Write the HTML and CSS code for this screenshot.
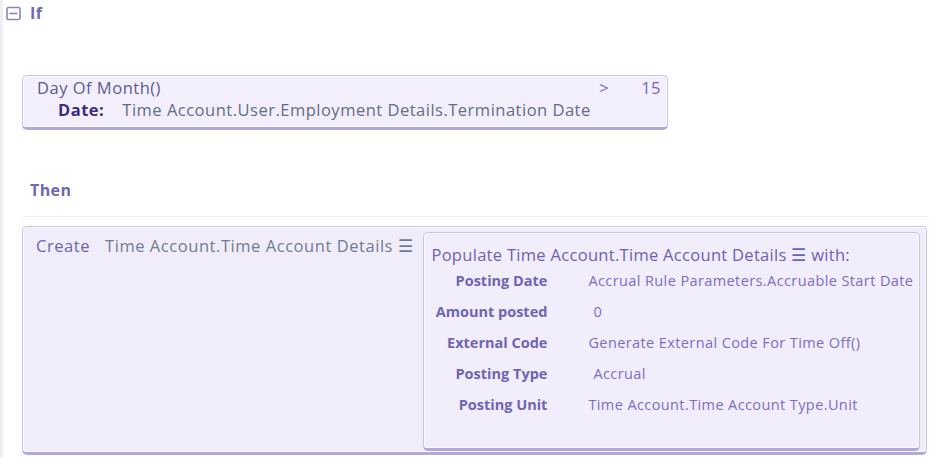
FILE: index.html
```html
<!DOCTYPE html>
<html lang="en">
  <head>
    <meta charset="UTF-8" />
    <meta name="viewport" content="width=device-width, initial-scale=1.0" />
    <title>Rule</title>
    <link rel="stylesheet" href="styles.css">
  </head>
  <body>
    <div class="rule">
      <div class="head">
        <svg class="toggle" width="15" height="15" viewBox="0 0 15 15">
          <rect x="1" y="1.5" width="13" height="12" rx="1.5" fill="none" stroke="#8a86c2" stroke-width="1.6" />
          <line x1="3.5" y1="7.5" x2="11.5" y2="7.5" stroke="#8a86c2" stroke-width="1.6" />
        </svg>
        <span class="kw">If</span>
      </div>

      <div class="card cond">
        <div class="cond-row">
          <span class="fn">Day Of Month()</span>
          <span class="cmp"><span class="op">&gt;</span><span class="num">15</span></span>
        </div>
        <div class="param">
          <span class="param-name">Date:</span>
          <span class="param-value">Time Account.User.Employment Details.Termination Date</span>
        </div>
      </div>

      <div class="kw then">Then</div>

      <div class="card action">
        <div class="create">
          <span class="verb">Create</span>
          <span class="target">Time Account.Time Account Details &#9776;</span>
        </div>
        <div class="card populate">
          <div class="populate-title">Populate Time Account.Time Account Details &#9776; with:</div>
          <div class="fields">
            <span class="label">Posting Date</span>
            <span class="value">Accrual Rule Parameters.Accruable Start Date</span>
            <span class="label">Amount posted</span>
            <span class="value shift">0</span>
            <span class="label">External Code</span>
            <span class="value">Generate External Code For Time Off()</span>
            <span class="label">Posting Type</span>
            <span class="value shift">Accrual</span>
            <span class="label">Posting Unit</span>
            <span class="value">Time Account.Time Account Type.Unit</span>
          </div>
        </div>
      </div>
    </div>
  </body>
</html>
```

FILE: styles.css
```css
body {
  margin: 0;
  background: #fff;
  font-family: "Open Sans", Arial, sans-serif;
  color: #5e6088;
}
.rule {
  border-left: 3px solid #eeeef3;
  height: 458px;
  box-sizing: border-box;
  padding: 4px 2px 0 19px;
}
.head {
  display: flex;
  align-items: center;
  gap: 9px;
  margin-left: -16px;
  height: 18px;
}
.kw {
  font-weight: bold;
  font-size: 16px;
  letter-spacing: 0.4px;
  color: #6e68ae;
}
.card {
  background: #f3eefb;
  border: 1px solid #cbc3e6;
  border-bottom: 3px solid #b3a9d9;
  border-radius: 5px;
  box-shadow: inset 0 0 0 1px #fbf9ff;
}
.cond {
  width: 646px;
  box-sizing: border-box;
  margin-top: 53px;
  padding: 1px 6px 6px 14px;
  font-size: 16.5px;
  letter-spacing: 0.5px;
  line-height: 22px;
}
.cond-row {
  display: flex;
  justify-content: space-between;
}
.fn {
  color: #5b5c8c;
}
.cmp {
  display: flex;
  gap: 32px;
  color: #7068b8;
}
.param {
  display: flex;
  gap: 18px;
  padding-left: 21px;
}
.param-name {
  font-weight: bold;
  color: #3d2b7e;
}
.param-value {
  color: #5f6f86;
}
.then {
  margin: 49px -2px 0 0;
  padding: 0 0 15px 8px;
  border-bottom: 1px solid #f1f1f4;
}
.action {
  margin-top: 9px;
  height: 229px;
  box-sizing: border-box;
  display: flex;
  gap: 10px;
  padding: 5px 6px 1px 13px;
  background: #f1ecf9;
}
.create {
  display: flex;
  gap: 15px;
  font-size: 16.5px;
  letter-spacing: 0.55px;
  padding-top: 2px;
  white-space: nowrap;
}
.verb {
  color: #6a66a6;
}
.target {
  color: #6f7d92;
}
.populate {
  flex: 1;
  padding: 10px 4px 6px 7px;
  background: #f2edfb;
}
.populate-title {
  font-size: 16.5px;
  letter-spacing: 0.3px;
  color: #6a62b2;
}
.fields {
  display: grid;
  grid-template-columns: 116px 1fr;
  column-gap: 41px;
  row-gap: 12px;
  margin-top: 5px;
  font-size: 14.5px;
  letter-spacing: 0.4px;
  line-height: 19px;
}
.label {
  text-align: right;
  font-weight: bold;
  letter-spacing: 0;
  white-space: nowrap;
  color: #6e66b0;
}
.value {
  color: #7a6ec2;
  white-space: nowrap;
}
.value.shift {
  padding-left: 5px;
}
```
